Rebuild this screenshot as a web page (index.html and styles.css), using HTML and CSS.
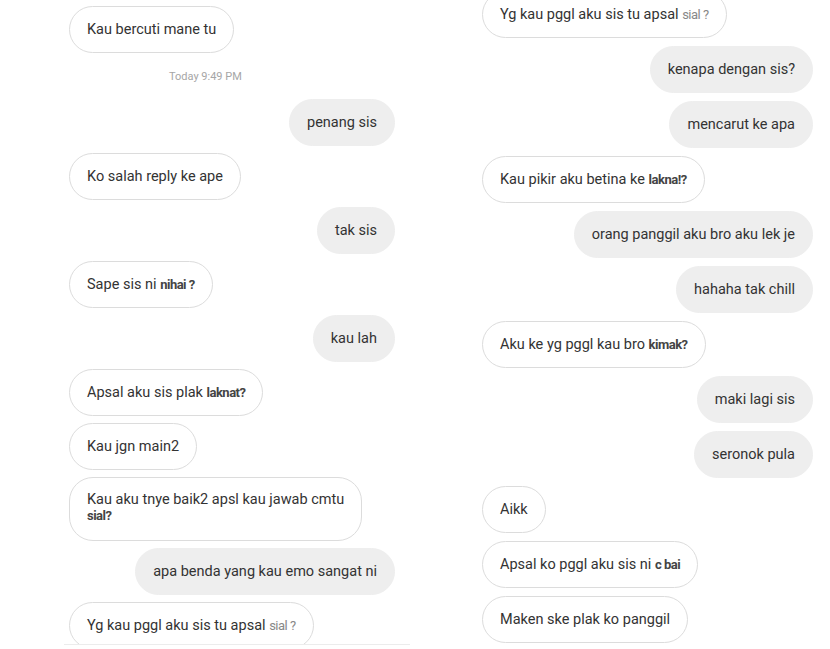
FILE: index.html
```html
<!DOCTYPE html>
<html>
<head>
<meta charset="utf-8">
<link rel="stylesheet" href="styles.css">
</head>
<body>
<div class="page">
  <div class="panel panel-left">
    <div class="msg in">Kau bercuti mane tu</div>
    <div class="stamp">Today 9:49 PM</div>
    <div class="msg out">penang sis</div>
    <div class="msg in">Ko salah reply ke ape</div>
    <div class="msg out">tak sis</div>
    <div class="msg in">Sape sis ni <span class="cen">nihai ?</span></div>
    <div class="msg out">kau lah</div>
    <div class="msg in">Apsal aku sis plak <span class="cen">laknat?</span></div>
    <div class="msg in">Kau jgn main2</div>
    <div class="msg in multi">Kau aku tnye baik2 apsl kau jawab cmtu<br><span class="cen">sial?</span></div>
    <div class="msg out">apa benda yang kau emo sangat ni</div>
    <div class="msg in">Yg kau pggl aku sis tu apsal <span class="cen light">sial ?</span></div>
  </div>
  <div class="panel panel-right">
    <div class="msg in">Yg kau pggl aku sis tu apsal <span class="cen light">sial ?</span></div>
    <div class="msg out">kenapa dengan sis?</div>
    <div class="msg out">mencarut ke apa</div>
    <div class="msg in">Kau pikir aku betina ke <span class="cen">lakna!?</span></div>
    <div class="msg out">orang panggil aku bro aku lek je</div>
    <div class="msg out">hahaha tak chill</div>
    <div class="msg in">Aku ke yg pggl kau bro <span class="cen">kimak?</span></div>
    <div class="msg out">maki lagi sis</div>
    <div class="msg out">seronok pula</div>
    <div class="msg in">Aikk</div>
    <div class="msg in">Apsal ko pggl aku sis ni <span class="cen">c bai</span></div>
    <div class="msg in">Maken ske plak ko panggil</div>
  </div>
</div>
</body>
</html>
```

FILE: styles.css
```css
html, body {
  margin: 0;
  padding: 0;
  background: #ffffff;
  overflow: hidden;
}
body {
  width: 830px;
  height: 649px;
  font-family: Roboto, "Liberation Sans", sans-serif;
  color: #333333;
}
.page {
  display: flex;
  align-items: flex-start;
}
.panel {
  display: flex;
  flex-direction: column;
}
.panel-left {
  margin-left: 64px;
  width: 346px;
  height: 645px;
  overflow: hidden;
  border-bottom: 1px solid #ececec;
  padding: 6px 15px 0 5px;
  box-sizing: border-box;
  gap: 7px;
}
.panel-right {
  margin-left: 67px;
  width: 341px;
  padding: 0 5px 0 5px;
  box-sizing: border-box;
  margin-top: -9px;
  gap: 8px;
}
.msg {
  font-size: 14.5px;
  line-height: 17px;
  padding: 14px 17px;
  border-radius: 24px;
  max-width: 300px;
  box-sizing: border-box;
  white-space: nowrap;
  flex-shrink: 0;
}
.msg.in {
  align-self: flex-start;
  background: #ffffff;
  border: 1px solid #dcdcdc;
}
.msg.out {
  align-self: flex-end;
  background: #eeeeee;
  border: 1px solid #eeeeee;
}
.msg.multi {
  padding-top: 14px;
  padding-bottom: 16px;
  padding-right: 17px;
  line-height: 16px;
}
.cen {
  font-weight: bold;
  letter-spacing: -0.5px;
  color: #444;
  font-size: 13px;
}
.cen.light {
  color: #888;
  font-weight: normal;
}
.stamp {
  font-size: 11px;
  color: #a6a6a6;
  padding-left: 100px;
  line-height: 13px;
  margin: 10px 0 9px 0;
}
```
